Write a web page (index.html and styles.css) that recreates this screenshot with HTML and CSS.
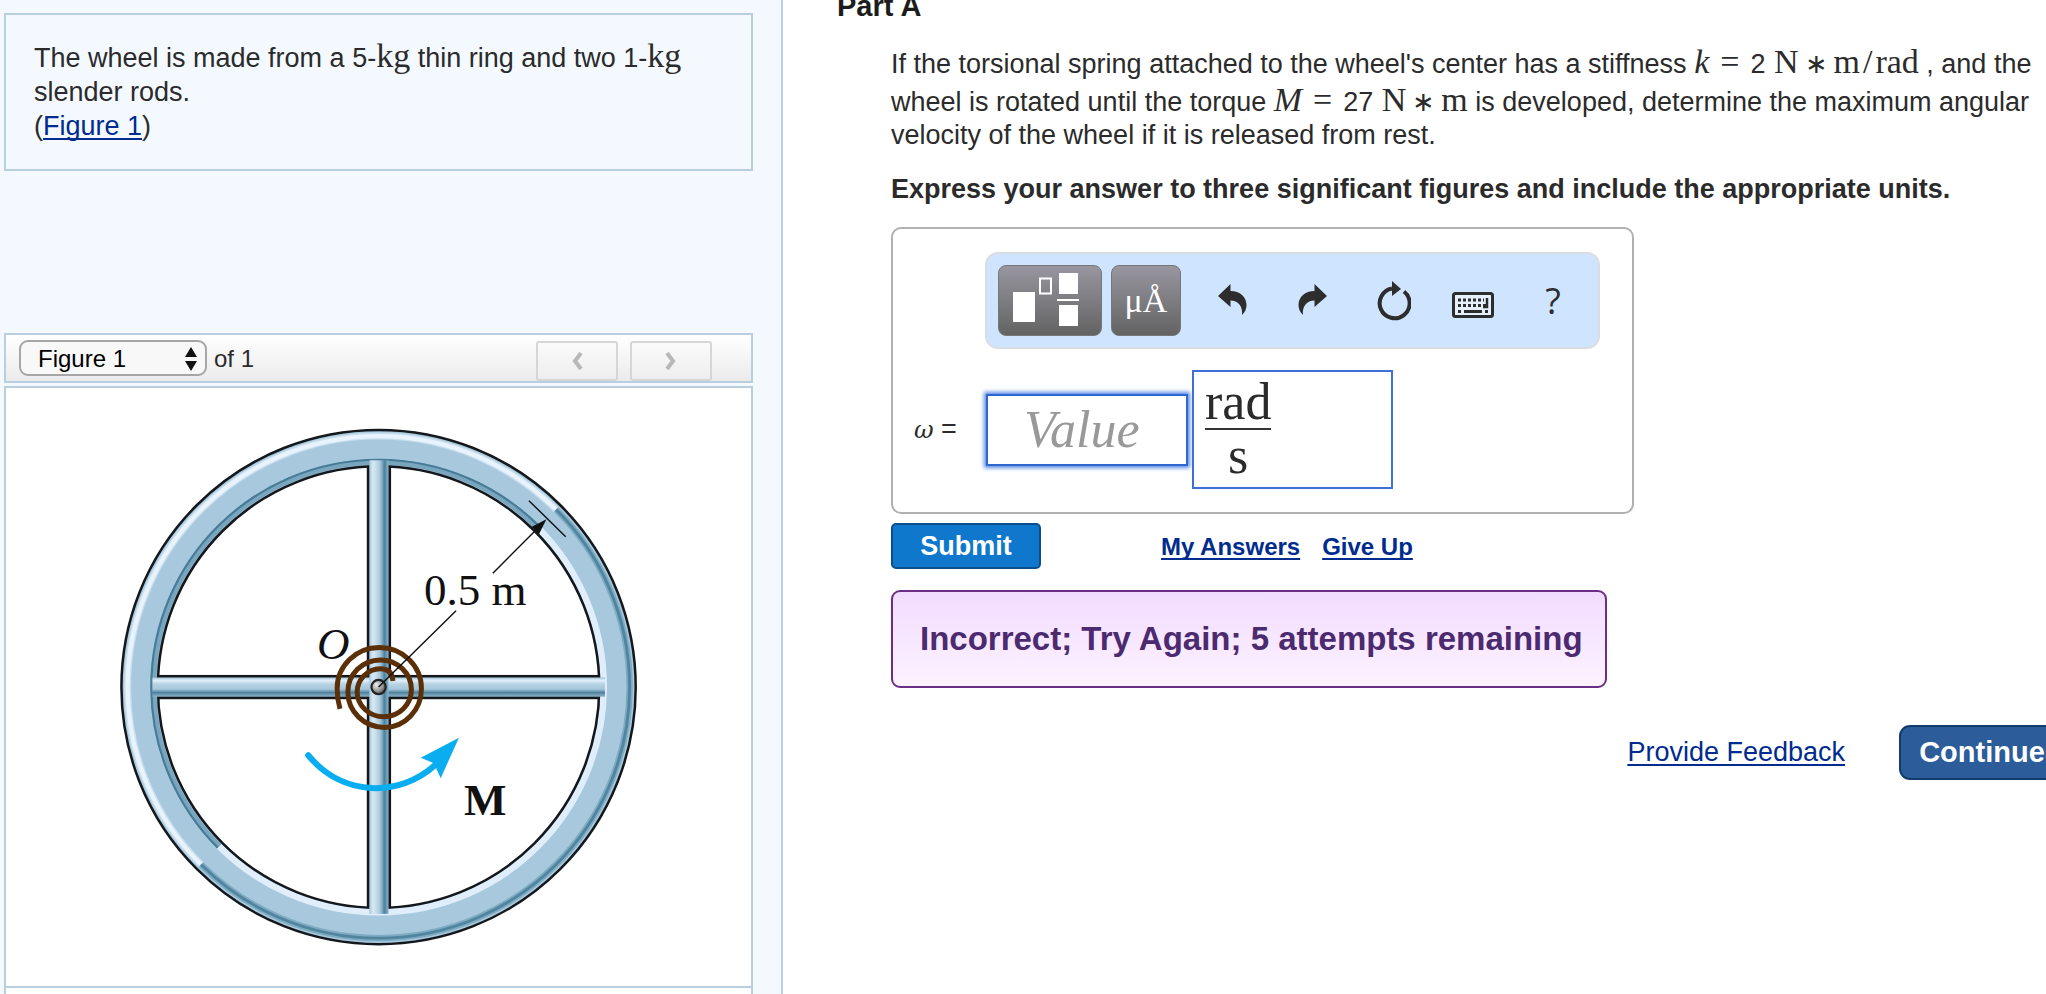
FILE: index.html
```html
<!DOCTYPE html>
<html lang="en">
<head>
<meta charset="utf-8">
<title>Part A</title>
<link rel="stylesheet" href="styles.css">
</head>
<body>
<div class="page">
  <aside class="side">
    <section class="intro">
      <p>The wheel is made from a 5-<span class="unit">kg</span> thin ring and two 1-<span class="unit">kg</span> slender rods.<br>(<a href="#figure">Figure 1</a>)</p>
    </section>
    <div class="figbar">
      <div class="picker">
        <select id="figsel" aria-label="Figure"><option>Figure 1</option></select>
        <svg class="arrows" viewBox="0 0 12 24" aria-hidden="true"><path d="M6 0l6 10H0zM6 24l6-10H0z"/></svg>
      </div>
      <label for="figsel">of 1</label>
      <div class="pager">
        <button type="button" aria-label="Previous figure"><svg viewBox="0 0 12 18"><path d="M10 1L4 9l6 8"/></svg></button>
        <button type="button" aria-label="Next figure"><svg viewBox="0 0 12 18"><path d="M2 1l6 8-6 8"/></svg></button>
      </div>
    </div>
    <figure class="figure" id="figure">
      <svg class="wheel" viewBox="0 0 560 560" role="img" aria-label="Wheel with torsional spring at its center">
        <defs>
          <linearGradient id="rodv" x1="0" x2="1" y1="0" y2="0">
            <stop offset="0" stop-color="#9fc3d8"/><stop offset=".1" stop-color="#c2daea"/><stop offset=".2" stop-color="#d8e9f5"/><stop offset=".38" stop-color="#c3d9e8"/><stop offset=".55" stop-color="#a7c8dc"/><stop offset=".68" stop-color="#7ba6be"/><stop offset=".78" stop-color="#4e819d"/><stop offset=".9" stop-color="#6b9bb5"/><stop offset="1" stop-color="#8fb6cc"/>
          </linearGradient>
          <linearGradient id="rodh" x1="0" x2="0" y1="0" y2="1">
            <stop offset="0" stop-color="#9fc3d8"/><stop offset=".15" stop-color="#e2f0fa"/><stop offset=".35" stop-color="#b8d3e3"/><stop offset=".6" stop-color="#a7c8dc"/><stop offset=".7" stop-color="#7ba6be"/><stop offset=".78" stop-color="#4e819d"/><stop offset="1" stop-color="#8fb6cc"/>
          </linearGradient>
          <radialGradient id="pin" cx=".35" cy=".35" r=".7"><stop offset="0" stop-color="#eee"/><stop offset=".6" stop-color="#999"/><stop offset="1" stop-color="#555"/></radialGradient>
        </defs>
        <g class="shapes" transform="scale(.357143)">
          <circle cx="780" cy="801" r="720" fill="#a7c8dd" stroke="#14181c" stroke-width="7"/>
          <g fill="none">
            <path d="M1277 304A1 1 0 0 0 283 1298" stroke="#c9deed" stroke-width="20"/>
            <path d="M1277 304A1 1 0 0 0 283 1298" stroke="#e8f3fd" stroke-width="12"/>
            <path d="M1277 304A1 1 0 0 1 283 1298" stroke="#7fabc2" stroke-width="18"/>
            <path d="M1277 304A1 1 0 0 1 283 1298" stroke="#4f859f" stroke-width="8"/>
            <path d="M1226 355A1 1 0 0 0 334 1247" stroke="#79a6be" stroke-width="16"/>
            <path d="M1230 351A1 1 0 0 0 330 1251" stroke="#477c98" stroke-width="6"/>
            <path d="M1226 355A1 1 0 0 1 334 1247" stroke="#dfeefa" stroke-width="18"/>
          </g>
          <circle cx="780" cy="801" r="618" fill="#fff" stroke="#14181c" stroke-width="7"/>
          <rect x="747" y="184" width="68" height="1236" fill="#14181c"/>
          <rect x="163" y="767" width="1236" height="68" fill="#14181c"/>
          <rect x="147" y="774" width="1267" height="54" fill="url(#rodh)"/>
          <rect x="754" y="166" width="54" height="1270" fill="url(#rodv)"/>
          <path d="M672 862Q664 835 664 805A118 115 0 0 1 782 690A118 115 0 0 1 900 805A103 109 0 0 1 797 914A103 99 0 0 1 694 815A91 90 0 0 1 785 725A87 83 0 0 1 872 808A77 76 0 0 1 795 884A75 69 0 0 1 720 815A65 65 0 0 1 785 750Q818 750 820 784" fill="none" stroke="#5b2f08" stroke-width="14"/>
          <circle cx="780" cy="801" r="20" fill="url(#pin)" stroke="#222" stroke-width="6"/>
          <path d="M780 801L997 587M1100 482L1232 350M1201 279L1304 380" fill="none" stroke="#111" stroke-width="4"/>
          <path d="M1250 331L1209 352 1229 373z" fill="#111"/>
          <path d="M583 992C680 1110 840 1110 940 1018" fill="none" stroke="#0aaef0" stroke-width="17" stroke-linecap="round"/>
          <path d="M1005 943L898 999 935 1014 954 1056z" fill="#0aaef0"/>
        </g>
        <text x="324" y="204">0.5 m</text>
        <text x="217" y="258" class="origin">O</text>
        <text x="364" y="414" class="moment">M</text>
      </svg>
    </figure>
    <div class="nextbox"></div>
  </aside>

  <main class="main">
    <h2>Part A</h2>
    <div class="body">
      <p class="question">If the torsional spring attached to the wheel's center has a stiffness <span class="math"><i>k</i><span class="rel">=</span><span class="num">2</span> N<span class="op">∗</span>m<span class="slash">/</span>rad</span> , and the<br>wheel is rotated until the torque <span class="math"><i>M</i><span class="rel">=</span><span class="num">27</span> N<span class="op">∗</span>m</span> is developed, determine the maximum angular<br>velocity of the wheel if it is released from rest.</p>
      <p class="express">Express your answer to three significant figures and include the appropriate units.</p>

      <form class="answer" id="answer">
        <div class="toolbar">
          <button type="button" class="key wide" aria-label="Templates">
            <svg viewBox="0 0 104 71"><path d="M15 27h22v30H15zM61 8h19v21H61zM61 40h19v21H61zM59 34h22v2H59z" fill="#fff"/><path d="M42 13.500h11v15H42z" fill="none" stroke="#fff" stroke-width="2"/></svg>
          </button>
          <button type="button" class="key">μÅ</button>
          <button type="button" class="tool" aria-label="Undo"><svg viewBox="0 0 30 34"><path d="M0 12L12.500 0v7C22 7 28.500 13 28.500 21 28.500 25 27 28 24 31 25 22 20 16.500 12.500 16.500V23z"/></svg></button>
          <button type="button" class="tool" aria-label="Redo"><svg viewBox="0 0 30 34"><path d="M29 12L16.500 0v7C7 7 .5 13 .5 21 .5 25 2 28 5 31 4 22 9 16.500 16.500 16.500V23z"/></svg></button>
          <button type="button" class="tool" aria-label="Reset"><svg class="reset" viewBox="0 0 36 40"><path d="M29 10.500A15 15 0 1 1 17 7.500" fill="none" stroke="#2d2d2d" stroke-width="4"/><path d="M17 0l9 8-9 7z"/></svg></button>
          <button type="button" class="tool" aria-label="Keyboard"><svg class="kbd" viewBox="0 0 42 26"><rect x="1.500" y="1.500" width="39" height="23" rx="2" fill="#e6f0fb" stroke="#2d2d2d" stroke-width="3"/><path d="M6 8h26M6 13.500h28" stroke="#2d2d2d" stroke-width="3" stroke-dasharray="3 2" fill="none"/><path d="M35 6v9h-4" stroke="#2d2d2d" stroke-width="2.500" fill="none"/><path d="M6 19.500h3M12 19.500h18M33 19.500h3" stroke="#2d2d2d" stroke-width="3" fill="none"/></svg></button>
          <button type="button" class="tool help" aria-label="Help">?</button>
        </div>
        <div class="entry">
          <label for="value"><i>ω</i> =</label>
          <input id="value" type="text" placeholder="Value">
          <div class="units" tabindex="0" aria-label="Units"><span class="frac"><span>rad</span><span class="den">s</span></span></div>
        </div>
      </form>

      <div class="actions">
        <button type="submit" form="answer" class="submit">Submit</button>
        <a href="#answers">My Answers</a>
        <a href="#giveup">Give Up</a>
      </div>
      <div class="result" role="status">Incorrect; Try Again; 5 attempts remaining</div>
      <div class="foot">
        <a href="#feedback">Provide Feedback</a>
        <button type="button" class="continue">Continue</button>
      </div>
    </div>
  </main>
</div>
</body>
</html>
```
FILE: styles.css
```css
* { box-sizing: border-box; }
body {
  margin: 0;
  overflow: hidden;
  background: #fff;
  color: #2b2b2b;
  font: 27px/33px "Liberation Sans", Arial, sans-serif;
}
p, h2, figure { margin: 0; }
button, input, select { font: inherit; color: inherit; }
button { display: flex; align-items: center; justify-content: center; padding: 0; cursor: pointer; }
a { color: #002b8f; text-decoration-thickness: 2px; text-underline-offset: 3px; text-decoration-skip-ink: none; }

.page { display: grid; grid-template-columns: 783fr 1263fr; height: 100vh; }

/* left column */
.side {
  display: flex;
  flex-direction: column;
  padding: 13px 28px 0 4px;
  background: #f4f9ff;
  border-right: 2px solid #b9cfe4;
  overflow: hidden;
}
.intro {
  padding: 26px 28px;
  border: 2px solid #b9cfe0;
  flex: none;
}
.intro p { line-height: 34px; padding-right: 20px; }
.unit { font-family: "Liberation Serif", "Times New Roman", serif; font-size: 34px; line-height: 0; }
.figbar {
  display: flex;
  align-items: center;
  flex: none;
  height: 50px;
  margin-top: 162px;
  padding: 0 39px 0 13px;
  border: 2px solid #b9cfe0;
  background: linear-gradient(#fff, #ebebeb);
  font-size: 24px;
}
.picker { position: relative; margin-right: 7px; }
.picker select {
  display: block;
  appearance: none;
  width: 188px;
  height: 36px;
  padding: 0 30px 2px 17px;
  border: 2px solid #a6a6a6;
  border-radius: 9px;
  background: #f8f8f8;
  color: #000;
}
.arrows { position: absolute; right: 10px; top: 7px; width: 12px; height: 24px; fill: #111; pointer-events: none; }
.pager { display: flex; gap: 12px; margin-left: auto; align-self: flex-end; }
.pager button {
  width: 82px;
  height: 40px;
  border: 2px solid #d6d6d6;
  border-radius: 3px;
  background: linear-gradient(#fafafa, #eee);
}
.pager svg { width: 12px; height: 18px; fill: none; stroke: #b8b8b8; stroke-width: 4; }
.figure {
  flex: none;
  margin-top: 3px;
  padding: 13px 91px 25px 94px;
  border: 2px solid #b9cfe0;
  background: #fff;
}
.wheel { display: block; width: 100%; max-width: 560px; font-family: "Liberation Serif", "Times New Roman", serif; font-size: 45px; fill: #111; }
.origin { font-style: italic; }
.moment { font-weight: bold; }
.nextbox { flex: 1; border: solid #b9cfe0; border-width: 0 2px; background: #fff; }

/* right column */
.main { padding-left: 54px; overflow: hidden; }
.main h2 { margin-top: -11px; font-size: 29px; line-height: 34px; color: #1c1c1c; }
.body { padding: 20px 0 0 54px; }
.question { white-space: nowrap; }
.math { display: inline-block; padding-top: 2px; font: 34px/33px "Liberation Serif", "Times New Roman", serif; }
.rel { padding: 0 11px; }
.num { font: 27px/33px "Liberation Sans", Arial, sans-serif; }
.op { padding: 0 6px; font-size: 27px; }
.slash { padding: 0 3px; }
.express { margin: 21px 0; font-weight: bold; white-space: nowrap; }

.answer {
  max-width: 743px;
  padding: 23px 32px 23px 92px;
  border: 2px solid #b0b0b0;
  border-radius: 10px;
}
.toolbar {
  display: flex;
  align-items: center;
  height: 97px;
  padding: 0 5px 0 11px;
  border: 2px solid #d9dde2;
  border-radius: 13px;
  background: #cfe5ff;
}
.key {
  width: 70px;
  height: 71px;
  border: 1px solid #777;
  border-radius: 8px;
  background: linear-gradient(#98969f, #636363);
  color: #fff;
  font: 34px/40px "Liberation Serif", "Times New Roman", serif;
}
.key.wide { width: 104px; margin-right: 9px; }
.key.wide svg { width: 104px; height: 71px; flex: none; }
.tool { flex: 1; height: 71px; border: 0; background: none; color: #2d2d2d; }
.key + .tool { margin-left: 12px; }
.tool svg { width: 30px; height: 34px; fill: #2d2d2d; }
.tool .reset { width: 36px; height: 40px; }
.tool .kbd { width: 42px; height: 26px; margin-top: 8px; }
.help { font: 36px/40px "Open Sans", sans-serif; }
.entry { display: flex; align-items: center; margin: 21px 0 0 -92px; }
.entry label { width: 93px; padding-left: 21px; font-size: 27px; }
.entry label i { font-family: "DejaVu Serif", serif; font-size: 24px; }
.entry input {
  width: 202px;
  height: 72px;
  padding: 0 36px;
  border: 2px solid #2f66d0;
  background: #fff;
  outline: 0;
  box-shadow: 0 0 4px 2px #5a8ae6;
  font: 52px/60px "Liberation Serif", "Times New Roman", serif;
}
.entry input::placeholder { color: #999; font-style: italic; opacity: 1; }
.units {
  width: 201px;
  height: 119px;
  margin-left: 4px;
  padding: 4px 11px;
  border: 2px solid #3f70d8;
  font: 52px/52px "Liberation Serif", "Times New Roman", serif;
}
.frac { display: inline-flex; flex-direction: column; text-align: center; }
.den { border-top: 2px solid #333; }

.actions { display: flex; align-items: center; margin-top: 9px; font-size: 24px; font-weight: bold; }
.submit {
  width: 150px;
  height: 46px;
  margin-right: 120px;
  border: 2px solid #0a4f8c;
  border-radius: 5px;
  background: #0f78cc;
  color: #fff;
  font-size: 27px;
}
.actions a + a { margin-left: 22px; }
.result {
  max-width: 716px;
  margin-top: 21px;
  padding: 31px 27px;
  border: 2px solid #6d2f86;
  border-radius: 9px;
  background: linear-gradient(#f2dcff, #fdf2ff);
  color: #4c2a70;
  font-size: 33px;
  font-weight: bold;
  line-height: 32px;
  white-space: nowrap;
}
.foot { display: flex; align-items: center; justify-content: flex-end; gap: 54px; margin: 37px -19px 0 0; }
.continue {
  width: 166px;
  height: 55px;
  border: 2px solid #123c6e;
  border-radius: 11px;
  background: #2c5c9a;
  color: #fff;
  font-size: 29px;
  font-weight: bold;
}
```
